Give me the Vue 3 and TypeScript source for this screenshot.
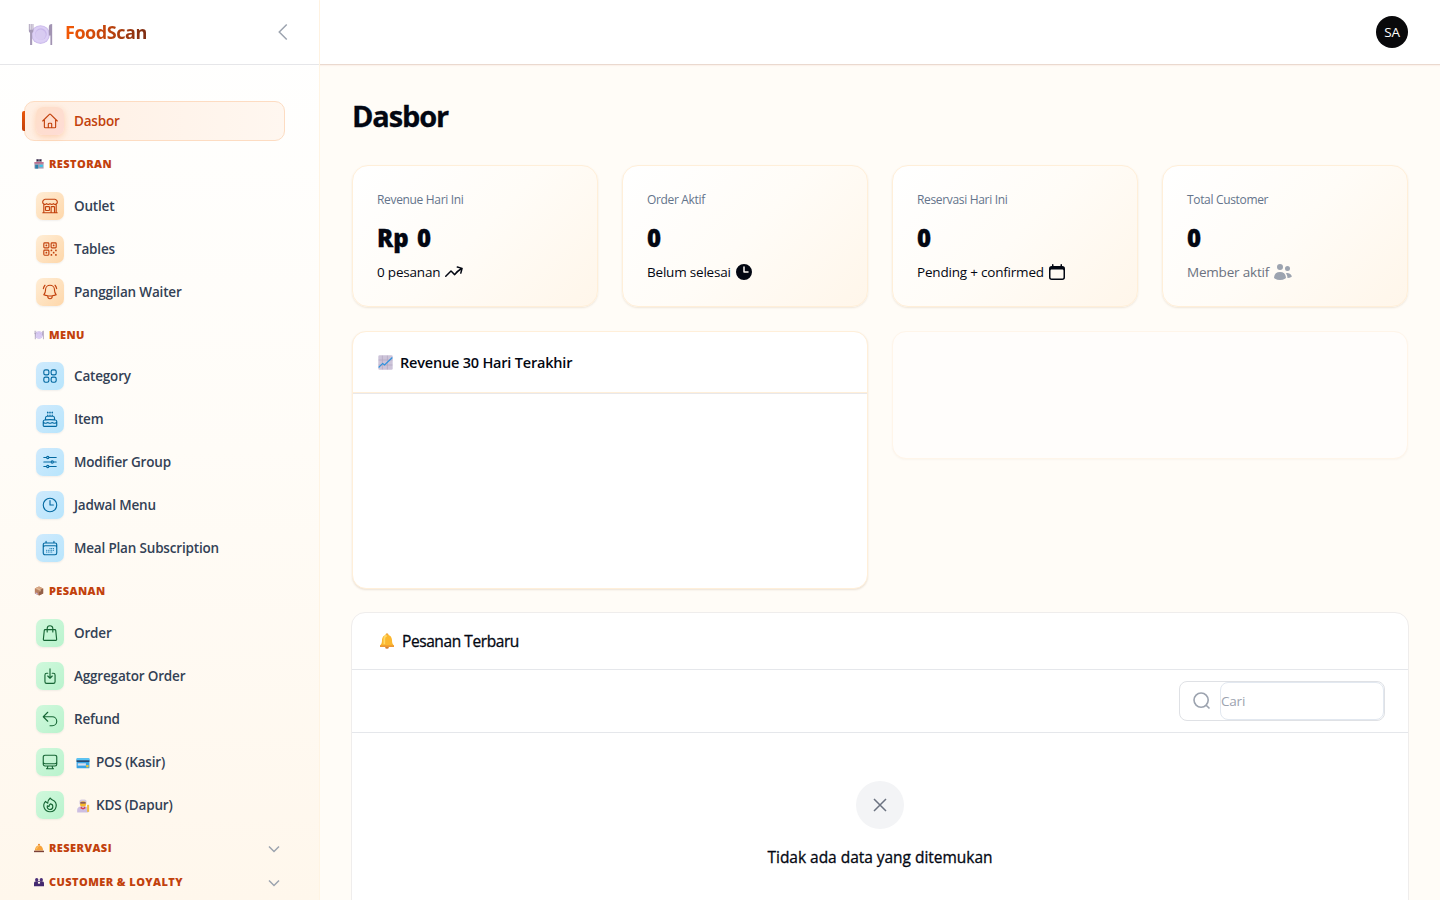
<script setup lang="ts">
interface NavItem {
  label: string
  icon: string
  emoji?: string
}
interface NavGroup {
  label: string
  emoji: string
  tone: string
  items: NavItem[]
}
interface Stat {
  label: string
  value: string
  note: string
  icon: string
  muted?: boolean
}

const outline: Record<string, string> = {
  home: 'm2.25 12 8.954-8.955c.44-.439 1.152-.439 1.591 0L21.75 12M4.5 9.75v10.125c0 .621.504 1.125 1.125 1.125H9.75v-4.875c0-.621.504-1.125 1.125-1.125h2.25c.621 0 1.125.504 1.125 1.125V21h4.125c.621 0 1.125-.504 1.125-1.125V9.75M8.25 21h8.25',
  store: 'M13.5 21v-7.5a.75.75 0 0 1 .75-.75h3a.75.75 0 0 1 .75.75V21m-4.5 0H2.36m11.14 0H18m0 0h3.64m-1.39 0V9.349M3.75 21V9.349m0 0a3.001 3.001 0 0 0 3.75-.615A2.993 2.993 0 0 0 9.75 9.75c.896 0 1.7-.393 2.25-1.016a2.993 2.993 0 0 0 2.25 1.016c.896 0 1.7-.393 2.25-1.015a3.001 3.001 0 0 0 3.75.614m-16.5 0a3.004 3.004 0 0 1-.621-4.72l1.189-1.19A1.5 1.5 0 0 1 5.378 3h13.243a1.5 1.5 0 0 1 1.06.44l1.19 1.189a3 3 0 0 1-.621 4.72M6.75 18h3.75a.75.75 0 0 0 .75-.75V13.5a.75.75 0 0 0-.75-.75H6.75a.75.75 0 0 0-.75.75v3.75c0 .414.336.75.75.75Z',
  qr: 'M3.75 4.875c0-.621.504-1.125 1.125-1.125h4.5c.621 0 1.125.504 1.125 1.125v4.5c0 .621-.504 1.125-1.125 1.125h-4.5A1.125 1.125 0 0 1 3.75 9.375v-4.5ZM3.75 14.625c0-.621.504-1.125 1.125-1.125h4.5c.621 0 1.125.504 1.125 1.125v4.5c0 .621-.504 1.125-1.125 1.125h-4.5a1.125 1.125 0 0 1-1.125-1.125v-4.5ZM13.5 4.875c0-.621.504-1.125 1.125-1.125h4.5c.621 0 1.125.504 1.125 1.125v4.5c0 .621-.504 1.125-1.125 1.125h-4.5A1.125 1.125 0 0 1 13.5 9.375v-4.5ZM6.75 6.75h.75v.75h-.75v-.75ZM6.75 16.5h.75v.75h-.75v-.75ZM16.5 6.75h.75v.75h-.75v-.75ZM13.5 13.5h.75v.75h-.75v-.75ZM13.5 19.5h.75v.75h-.75v-.75ZM19.5 13.5h.75v.75h-.75v-.75ZM19.5 19.5h.75v.75h-.75v-.75ZM16.5 16.5h.75v.75h-.75v-.75Z',
  bell: 'M14.857 17.082a23.848 23.848 0 0 0 5.454-1.31A8.967 8.967 0 0 1 18 9.75V9A6 6 0 0 0 6 9v.75a8.967 8.967 0 0 1-2.312 6.022c1.733.64 3.56 1.085 5.455 1.31m5.714 0a24.255 24.255 0 0 1-5.714 0m5.714 0a3 3 0 1 1-5.714 0M3.124 7.5A8.969 8.969 0 0 1 5.292 3m13.416 0a8.969 8.969 0 0 1 2.168 4.5',
  grid: 'M3.75 6A2.25 2.25 0 0 1 6 3.75h2.25A2.25 2.25 0 0 1 10.5 6v2.25a2.25 2.25 0 0 1-2.25 2.25H6a2.25 2.25 0 0 1-2.25-2.25V6ZM3.75 15.75A2.25 2.25 0 0 1 6 13.5h2.25a2.25 2.25 0 0 1 2.25 2.25V18a2.25 2.25 0 0 1-2.25 2.25H6A2.25 2.25 0 0 1 3.75 18v-2.25ZM13.5 6a2.25 2.25 0 0 1 2.25-2.25H18A2.25 2.25 0 0 1 20.25 6v2.25A2.25 2.25 0 0 1 18 10.5h-2.25a2.25 2.25 0 0 1-2.25-2.25V6ZM13.5 15.75a2.25 2.25 0 0 1 2.25-2.25H18a2.25 2.25 0 0 1 2.25 2.25V18A2.25 2.25 0 0 1 18 20.25h-2.25A2.25 2.25 0 0 1 13.5 18v-2.25Z',
  cake: 'M12 8.25v-1.5m0 1.5c-1.355 0-2.697.056-4.024.166C6.845 8.51 6 9.473 6 10.608v2.513m6-4.871c1.355 0 2.697.056 4.024.166C17.155 8.51 18 9.473 18 10.608v2.513M15 8.25v-1.5m-6 1.5v-1.5m12 9.75-1.5.75a3.354 3.354 0 0 1-3 0 3.354 3.354 0 0 0-3 0 3.354 3.354 0 0 1-3 0 3.354 3.354 0 0 0-3 0 3.354 3.354 0 0 1-3 0L3 16.5m15-3.379a48.474 48.474 0 0 0-6-.371c-2.032 0-4.034.126-6 .371m12 0c.39.049.777.102 1.163.16 1.07.16 1.837 1.094 1.837 2.175v5.169c0 .621-.504 1.125-1.125 1.125H4.125A1.125 1.125 0 0 1 3 20.625v-5.17c0-1.08.768-2.014 1.837-2.174A47.78 47.78 0 0 1 6 13.12M12.265 3.11a.375.375 0 1 1-.53 0L12 2.845l.265.265Zm-3 0a.375.375 0 1 1-.53 0L9 2.845l.265.265Zm6 0a.375.375 0 1 1-.53 0L15 2.845l.265.265Z',
  sliders: 'M10.5 6h9.75M10.5 6a1.5 1.5 0 1 1-3 0m3 0a1.5 1.5 0 1 0-3 0M3.75 6H7.5m3 12h9.75m-9.75 0a1.5 1.5 0 0 1-3 0m3 0a1.5 1.5 0 0 0-3 0m-3.75 0H7.5m9-6h3.75m-3.75 0a1.5 1.5 0 0 1-3 0m3 0a1.5 1.5 0 0 0-3 0m-9.75 0h9.75',
  clock: 'M12 6v6h4.5m4.5 0a9 9 0 1 1-18 0 9 9 0 0 1 18 0Z',
  calendar: 'M6.75 3v2.25M17.25 3v2.25M3 18.75V7.5a2.25 2.25 0 0 1 2.25-2.25h13.5A2.25 2.25 0 0 1 21 7.5v11.25m-18 0A2.25 2.25 0 0 0 5.25 21h13.5A2.25 2.25 0 0 0 21 18.75m-18 0v-7.5A2.25 2.25 0 0 1 5.25 9h13.5A2.25 2.25 0 0 1 21 11.25v7.5m-9-6h.008v.008H12v-.008ZM12 15h.008v.008H12V15Zm0 2.25h.008v.008H12v-.008ZM9.75 15h.008v.008H9.75V15Zm0 2.25h.008v.008H9.75v-.008ZM7.5 15h.008v.008H7.5V15Zm0 2.25h.008v.008H7.5v-.008Zm6.75-4.5h.008v.008h-.008v-.008Zm0 2.25h.008v.008h-.008V15Zm0 2.25h.008v.008h-.008v-.008Zm2.25-4.5h.008v.008H16.5v-.008Zm0 2.25h.008v.008H16.5V15Z',
  bag: 'M15.75 10.5V6a3.75 3.75 0 1 0-7.5 0v4.5m11.356-1.993 1.263 12c.07.665-.45 1.243-1.119 1.243H4.25a1.125 1.125 0 0 1-1.12-1.243l1.264-12A1.125 1.125 0 0 1 5.513 7.5h12.974c.576 0 1.059.435 1.119 1.007Z',
  inbox: 'M9 8.25H7.5a2.25 2.25 0 0 0-2.25 2.25v9a2.25 2.25 0 0 0 2.25 2.25h9a2.25 2.25 0 0 0 2.25-2.25v-9a2.25 2.25 0 0 0-2.25-2.25H15M9 12l3 3m0 0 3-3m-3 3V2.25',
  undo: 'M9 15 3 9m0 0 6-6M3 9h12a6 6 0 0 1 0 12h-3',
  desktop: 'M9 17.25v1.007a3 3 0 0 1-.879 2.122L7.5 21h9l-.621-.621A3 3 0 0 1 15 18.257V17.25m6-12V15a2.25 2.25 0 0 1-2.25 2.25H5.25A2.25 2.25 0 0 1 3 15V5.25m18 0A2.25 2.25 0 0 0 18.75 3H5.25A2.25 2.25 0 0 0 3 5.25m18 0V12a2.25 2.25 0 0 1-2.25 2.25H5.25A2.25 2.25 0 0 1 3 12V5.25',
  fire: 'M15.362 5.214A8.252 8.252 0 0 1 12 21 8.25 8.25 0 0 1 6.038 7.047 8.287 8.287 0 0 0 9 9.601a8.983 8.983 0 0 1 3.361-6.867 8.21 8.21 0 0 0 3 2.48ZM12 18a3.75 3.75 0 0 0 .495-7.468 5.99 5.99 0 0 0-1.925 3.547 5.975 5.975 0 0 1-2.133-1.001A3.75 3.75 0 0 0 12 18Z',
}

const solid: Record<string, string> = {
  trend: 'M12.577 4.878a.75.75 0 0 1 .919-.53l4.78 1.281a.75.75 0 0 1 .531.919l-1.281 4.78a.75.75 0 0 1-1.449-.387l.81-3.022a19.407 19.407 0 0 0-5.594 5.203.75.75 0 0 1-1.139.093L7 10.06l-4.72 4.72a.75.75 0 0 1-1.06-1.061l5.25-5.25a.75.75 0 0 1 1.06 0l3.074 3.073a20.923 20.923 0 0 1 5.545-4.931l-3.042-.815a.75.75 0 0 1-.53-.919Z',
  clock: 'M10 18a8 8 0 1 0 0-16 8 8 0 0 0 0 16Zm.75-13a.75.75 0 0 0-1.5 0v5c0 .414.336.75.75.75h4a.75.75 0 0 0 0-1.5h-3.25V5Z',
  calendar: 'M5.75 2a.75.75 0 0 1 .75.75V4h7V2.75a.75.75 0 0 1 1.5 0V4h.25A2.75 2.75 0 0 1 18 6.75v8.5A2.75 2.75 0 0 1 15.25 18H4.75A2.75 2.75 0 0 1 2 15.25v-8.5A2.75 2.75 0 0 1 4.75 4H5V2.75A.75.75 0 0 1 5.75 2Zm-1 5.5c-.69 0-1.25.56-1.25 1.25v6.5c0 .69.56 1.25 1.25 1.25h10.5c.69 0 1.25-.56 1.25-1.25v-6.5c0-.69-.56-1.25-1.25-1.25H4.75Z',
  users: 'M7 8a3 3 0 1 0 0-6 3 3 0 0 0 0 6ZM14.5 9a2.5 2.5 0 1 0 0-5 2.5 2.5 0 0 0 0 5ZM1.615 16.428a1.224 1.224 0 0 1-.569-1.175 6.002 6.002 0 0 1 11.908 0c.058.467-.172.92-.57 1.174A9.953 9.953 0 0 1 7 18a9.953 9.953 0 0 1-5.385-1.572ZM14.5 16h-.106c.07-.297.088-.611.048-.933a7.47 7.47 0 0 0-1.588-3.755 4.502 4.502 0 0 1 5.874 2.636.818.818 0 0 1-.36.98A7.465 7.465 0 0 1 14.5 16Z',
}

/* Small colour pictograms, each on a 24-unit grid. */
const pictos: Record<string, string> = {
  plate:
    '<circle cx="12" cy="12" r="9" fill="#cdbdec"/><circle cx="12" cy="12" r="8" fill="#dccff5"/><circle cx="12.4" cy="11.6" r="5.6" fill="#c9b8ea"/><circle cx="12" cy="12.3" r="5" fill="#d8cbf1"/><path d="M.8 2v6.2c0 1.2.5 1.9 1.2 2.2V22h2V10.4c.8-.3 1.2-1 1.2-2.200V2H4.300v5.500h-.8V2h-1v5.500h-.8V2z" fill="#a79bb8"/><path d="M20 13V5c0-2 1-3 3.200-3v20h-1.700v-9z" fill="#a294b3"/>',
  shop:
    '<rect x="5" y="0" width="14" height="9" fill="#b5adbf"/><rect x="6.500" y="1" width="4.500" height="4.500" fill="#30243c"/><rect x="13" y="1" width="4.500" height="4.500" fill="#30243c"/><rect x="1" y="8" width="22" height="15" fill="#a3a0b5"/><rect x="1" y="8" width="22" height="2.500" fill="#c94d74"/><rect x="3" y="14" width="7" height="9" fill="#2c7fa8"/><rect x="13" y="14" width="8" height="5" fill="#37c8ee"/>',
  box:
    '<path d="m12 1 10 5v12l-10 5L2 18V6z" fill="#b98061"/><path d="m12 1 10 5-10 5L2 6z" fill="#d6a583"/><path d="M12 11v12l10-5V6z" fill="#936049"/><path d="m6 3.800 10 5v4l-3 1.200v-4L4 5z" fill="#e4bb98"/><path d="m4 15 5 3v3l-5-2.500z" fill="#c7b3e0"/>',
  service:
    '<circle cx="12" cy="4" r="2.500" fill="#e98a2c"/><path d="M2 18C2.500 10.500 6 6 12 6s9.500 4.500 10 12z" fill="#f7a23b"/><path d="M6 15c.6-4 2-6 5-7" stroke="#ffd279" stroke-width="2" fill="none"/><rect x="0" y="18.500" width="24" height="3.500" fill="#7a4038"/>',
  people:
    '<circle cx="6.500" cy="6.500" r="4" fill="#4a2e78"/><circle cx="17.500" cy="6.500" r="4" fill="#4a2e78"/><path d="M0 22v-7c0-3 2-5 5-5h14c3 0 5 2 5 5v7z" fill="#43296f"/><rect x="9.500" y="12" width="5" height="4" fill="#fff6ea"/>',
  card:
    '<rect x="1" y="4" width="22" height="17" rx="1.500" fill="#36a3e4"/><rect x="1" y="4" width="22" height="5" fill="#5bc5f3"/><rect x="1" y="7.500" width="22" height="2.500" fill="#23365c"/><rect x="3" y="12.500" width="14" height="4" fill="#d6dff0"/><rect x="17.500" y="15.500" width="4" height="4" fill="#f4c534"/>',
  cook:
    '<path d="M6 6C5 1.500 8 0 12 1c4-1 7 .5 6 5v3H6z" fill="#d5cbe0"/><circle cx="12" cy="9" r="5" fill="#f8b92d"/><path d="M7.500 5h9v3h-9z" fill="#8b5c59"/><path d="M2 23v-4c0-3.500 3-6 6-6h8c3 0 5 2.500 5 6v4z" fill="#cdbfe2"/><path d="m8.500 13 3.500 3 3.500-3 1 3-4.500 2-4.500-2z" fill="#d93b52"/><rect x="19" y="10" width="3.500" height="12" fill="#f2bd45"/>',
  chart:
    '<rect x=".5" y=".5" width="23" height="23" rx="2" fill="#cdc4d9"/><path d="M7 1v22M1 8h22M1 16h22M15 1v22" stroke="#b3a8c1" stroke-width="1.200"/><path d="m1 20 6.500-6.500 3 2.500L23 4" stroke="#2e91de" stroke-width="1.900" fill="none"/>',
  alarm:
    '<path d="M10 3.500a2.200 2.200 0 1 1 4 0z" fill="#efa43a"/><circle cx="12" cy="21" r="2.800" fill="#d67d2c"/><path d="M4.500 11c0-5 3-8.500 7.500-8.500s7.500 3.500 7.500 8.500c0 4 1 6 3 8v2h-21v-2c2-2 3-4 3-8z" fill="#fbb72f"/><path d="M8 17V9c0-3 1.500-4.500 3.500-5" stroke="#ffda68" stroke-width="2.500" fill="none"/><path d="M1.500 18.500h21V21h-21z" fill="#ec9834"/>',
}

const groups: NavGroup[] = [
  {
    label: 'RESTORAN', emoji: 'shop', tone: 'amber',
    items: [
      { label: 'Outlet', icon: 'store' },
      { label: 'Tables', icon: 'qr' },
      { label: 'Panggilan Waiter', icon: 'bell' },
    ],
  },
  {
    label: 'MENU', emoji: 'plate', tone: 'sky',
    items: [
      { label: 'Category', icon: 'grid' },
      { label: 'Item', icon: 'cake' },
      { label: 'Modifier Group', icon: 'sliders' },
      { label: 'Jadwal Menu', icon: 'clock' },
      { label: 'Meal Plan Subscription', icon: 'calendar' },
    ],
  },
  {
    label: 'PESANAN', emoji: 'box', tone: 'mint',
    items: [
      { label: 'Order', icon: 'bag' },
      { label: 'Aggregator Order', icon: 'inbox' },
      { label: 'Refund', icon: 'undo' },
      { label: 'POS (Kasir)', icon: 'desktop', emoji: 'card' },
      { label: 'KDS (Dapur)', icon: 'fire', emoji: 'cook' },
    ],
  },
]

const folded = [
  { label: 'RESERVASI', emoji: 'service' },
  { label: 'CUSTOMER & LOYALTY', emoji: 'people' },
]

const stats: Stat[] = [
  { label: 'Revenue Hari Ini', value: 'Rp 0', note: '0 pesanan', icon: 'trend' },
  { label: 'Order Aktif', value: '0', note: 'Belum selesai', icon: 'clock' },
  { label: 'Reservasi Hari Ini', value: '0', note: 'Pending + confirmed', icon: 'calendar' },
  { label: 'Total Customer', value: '0', note: 'Member aktif', icon: 'users', muted: true },
]
</script>

<template>
  <div class="app">
    <aside class="sidebar">
      <header class="brand">
        <svg class="brand-mark" viewBox="0 0 24 24" v-html="pictos.plate"></svg>
        <span class="brand-name">FoodScan</span>
        <svg class="collapse" viewBox="0 0 24 24"><path d="M15.750 19.500 8.250 12l7.500-7.500" /></svg>
      </header>

      <nav class="nav">
        <a class="item active">
          <span class="tile rose"><svg class="glyph" viewBox="0 0 24 24"><path :d="outline.home" /></svg></span>
          <span class="item-label">Dasbor</span>
        </a>

        <section v-for="g in groups" :key="g.label">
          <h2 class="group-label">
            <svg viewBox="0 0 24 24" v-html="pictos[g.emoji]"></svg>
            <span>{{ g.label }}</span>
          </h2>
          <div class="items">
            <a v-for="i in g.items" :key="i.label" class="item">
              <span class="tile" :class="g.tone"><svg class="glyph" viewBox="0 0 24 24"><path :d="outline[i.icon]" /></svg></span>
              <svg v-if="i.emoji" class="item-emoji" viewBox="0 0 24 24" v-html="pictos[i.emoji]"></svg>
              <span class="item-label">{{ i.label }}</span>
            </a>
          </div>
        </section>

        <div class="folded-list">
          <h2 v-for="f in folded" :key="f.label" class="group-label folded">
            <svg viewBox="0 0 24 24" v-html="pictos[f.emoji]"></svg>
            <span>{{ f.label }}</span>
            <svg class="chevron" viewBox="0 0 20 20"><path d="m5 7.500 5 5 5-5" /></svg>
          </h2>
        </div>
      </nav>
    </aside>

    <div class="main">
      <header class="topbar"><span class="avatar">SA</span></header>

      <main class="content">
        <h1>Dasbor</h1>

        <div class="stats">
          <article v-for="s in stats" :key="s.label" class="stat">
            <span class="stat-label">{{ s.label }}</span>
            <strong class="stat-value">{{ s.value }}</strong>
            <span class="stat-note" :class="{ muted: s.muted }">
              <span>{{ s.note }}</span>
              <svg viewBox="0 0 20 20"><path fill-rule="evenodd" clip-rule="evenodd" :d="solid[s.icon]" /></svg>
            </span>
          </article>
        </div>

        <div class="charts">
          <section class="chart">
            <header class="chart-head">
              <svg viewBox="0 0 24 24" v-html="pictos.chart"></svg>
              <span>Revenue 30 Hari Terakhir</span>
            </header>
          </section>
          <section class="ghost"></section>
        </div>

        <section class="table">
          <header class="table-head">
            <svg viewBox="0 0 24 24" v-html="pictos.alarm"></svg>
            <span>Pesanan Terbaru</span>
          </header>
          <div class="toolbar">
            <div class="search">
              <svg viewBox="0 0 20 20"><path d="M14.200 14.200 17.500 17.500M16.200 9.100a7.100 7.100 0 1 1-14.200 0 7.100 7.100 0 0 1 14.200 0Z" /></svg>
              <div class="field">Cari</div>
            </div>
          </div>
          <div class="empty">
            <span class="empty-mark"><svg viewBox="0 0 24 24"><path d="M6 18 18 6M6 6l12 12" /></svg></span>
            <span class="empty-text">Tidak ada data yang ditemukan</span>
          </div>
        </section>
      </main>
    </div>
  </div>
</template>

<style>
html,
body {
  margin: 0;
  overflow: hidden;
}
</style>

<style scoped>
.app,
.app * {
  box-sizing: border-box;
}
.app {
  display: flex;
  width: 100%;
  height: 100vh;
  overflow: hidden;
  background: #fffcf7;
  color: #030712;
  font-family: "Open Sans", "Noto Sans", sans-serif;
}
h1,
h2 {
  margin: 0;
}
svg {
  flex: none;
  display: block;
}

/* Sidebar */
.sidebar {
  width: 320px;
  flex: none;
  height: 100vh;
  overflow: hidden;
  border-right: 1px solid #fff4e3;
  background: linear-gradient(180deg, #ffffff 0%, #fffcf7 50%, #fff7ec 100%);
}
.brand {
  display: flex;
  align-items: center;
  height: 65px;
  padding: 0 24px 0 28px;
  background: #fff;
  border-bottom: 1px solid #e6e6e9;
}
.brand-mark {
  width: 25px;
  height: 25px;
  margin-top: 4px;
}
.brand-name {
  margin-left: 12px;
  font-size: 18px;
  font-weight: 700;
  line-height: 28px;
  letter-spacing: -0.45px;
  background: linear-gradient(90deg, #f55a06 0%, #c2440c 50%, #7c2d12 100%);
  background-clip: text;
  color: transparent;
}
.collapse {
  width: 24px;
  height: 24px;
  margin-left: auto;
  fill: none;
  stroke: #9ca3af;
  stroke-width: 1.5;
}
.nav {
  padding: 36px 34px 0 24px;
}
.items {
  display: flex;
  flex-direction: column;
  gap: 3px;
}
.item {
  position: relative;
  display: flex;
  align-items: center;
  height: 40px;
  padding-left: 12px;
  color: #334155;
}
.active {
  padding-left: 11px;
  border: 1px solid #fddcc2;
  border-radius: 10px;
  background: linear-gradient(90deg, #ffefe3 0%, #fff7f0 100%);
  color: #c2410c;
}
.active::before {
  content: "";
  position: absolute;
  left: -3px;
  top: 9px;
  width: 3px;
  height: 20px;
  border-radius: 2px 0 0 2px;
  background: linear-gradient(180deg, #ea580c, #c2410c);
}
.tile {
  display: grid;
  place-items: center;
  width: 28px;
  height: 28px;
  margin-right: 10px;
  border-radius: 7px;
  box-shadow: 0 1px 2px rgba(15, 23, 42, 0.06);
}
.rose {
  background: linear-gradient(135deg, #fedfc8, #fedcd6);
  box-shadow: 0 2px 6px rgba(249, 115, 22, 0.25);
  color: #c2410c;
}
.amber {
  background: linear-gradient(135deg, #ffedd5, #fed7aa);
  color: #c2410c;
}
.sky {
  background: linear-gradient(135deg, #cfeafd, #b8e5fc);
  color: #0369a1;
}
.mint {
  background: linear-gradient(135deg, #d0f8dc, #b9f3cd);
  color: #166534;
}
.glyph {
  width: 18px;
  height: 18px;
  fill: none;
  stroke: currentColor;
  stroke-width: 1.5;
  stroke-linecap: round;
  stroke-linejoin: round;
}
.item-label {
  font-size: 13.5px;
  font-weight: 600;
  letter-spacing: -0.18px;
  line-height: 20px;
  white-space: nowrap;
}
.item-emoji {
  width: 14px;
  height: 14px;
  margin: 2px 6px 0 2px;
}
.group-label {
  display: flex;
  align-items: center;
  height: 44.6px;
  padding: 2px 2px 0 10px;
  color: #c2410c;
  font-size: 11px;
  font-weight: 800;
  line-height: 16px;
  letter-spacing: 0.42px;
}
.group-label svg {
  width: 10px;
  height: 10px;
  margin-right: 5px;
}
.folded-list {
  padding-top: 5px;
}
.folded {
  height: 34px;
}
.group-label .chevron {
  width: 20px;
  height: 20px;
  margin: 2px -1px 0 auto;
  fill: none;
  stroke: #9ca3af;
  stroke-width: 1.5;
}

/* Page */
.main {
  flex: 1;
  min-width: 0;
}
.topbar {
  display: flex;
  align-items: center;
  justify-content: flex-end;
  height: 65px;
  padding: 0 32px;
  background: #fff;
  border-bottom: 1px solid #ead9cf;
  box-shadow: 0 1px 1px rgba(194, 65, 12, 0.05);
}
.avatar {
  display: grid;
  place-items: center;
  width: 32px;
  height: 32px;
  border-radius: 50%;
  background: #09090b;
  color: #fff;
  font-size: 13.5px;
  letter-spacing: -0.3px;
}
.content {
  padding: 33px 31px 0 32px;
}
h1 {
  font-size: 29px;
  font-weight: 700;
  line-height: 36px;
  letter-spacing: -1.15px;
  -webkit-text-stroke: 0.3px currentColor;
}
.stats {
  display: grid;
  grid-template-columns: repeat(4, 246px);
  gap: 24px;
  margin-top: 31px;
}
.stat {
  display: flex;
  flex-direction: column;
  height: 142px;
  padding: 25px 24px;
  border: 1px solid #ffefd9;
  border-radius: 16px;
  background: linear-gradient(135deg, #ffffff 0%, #fffcf7 50%, #fff6ea 100%);
  box-shadow: 0 1px 2px rgba(120, 70, 20, 0.12);
}
.stat-label {
  color: #64748b;
  font-size: 12px;
  line-height: 18px;
  letter-spacing: -0.33px;
}
.stat-value {
  margin-top: 11px;
  font-size: 24px;
  font-weight: 800;
  line-height: 36px;
  letter-spacing: 0;
  word-spacing: 2px;
  -webkit-text-stroke: 0.3px currentColor;
}
.stat-note {
  display: flex;
  align-items: center;
  gap: 3.5px;
  margin-top: 6px;
  font-size: 13.5px;
  line-height: 20px;
  letter-spacing: -0.2px;
}
.stat-note svg {
  width: 20px;
  height: 20px;
  fill: currentColor;
}
.muted {
  color: #6b7280;
}
.muted svg {
  color: #9ca3af;
}
.charts {
  display: grid;
  grid-template-columns: 516px 516px;
  align-items: start;
  gap: 24px;
  margin-top: 24px;
}
.chart {
  height: 258px;
  border: 1px solid #ffefd9;
  border-radius: 14px;
  background: #fff;
  box-shadow: 0 1px 2px rgba(120, 70, 20, 0.14);
}
.chart-head {
  display: flex;
  align-items: center;
  gap: 7px;
  height: 61px;
  padding-left: 25px;
  border-bottom: 1px solid #ffefd9;
  box-shadow: 0 1px 0 #e9e8ea;
  font-size: 14.5px;
  font-weight: 600;
  letter-spacing: -0.2px;
}
.chart-head svg {
  width: 15px;
  height: 15px;
}
.ghost {
  height: 128px;
  border: 1px solid #fff5e9;
  border-radius: 14px;
  background: #fffdfb;
  box-shadow: 0 1px 2px rgba(120, 70, 20, 0.04);
}
.table {
  height: 360px;
  margin: 23px 0 0 -1px;
  border: 1px solid #efedec;
  border-radius: 14px;
  background: #fff;
}
.table-head {
  display: flex;
  align-items: center;
  gap: 7px;
  height: 57px;
  padding-left: 27px;
  border-bottom: 1px solid #e5e7eb;
  font-size: 15.5px;
  letter-spacing: -0.42px;
  -webkit-text-stroke: 0.3px currentColor;
}
.table-head svg {
  width: 16px;
  height: 16px;
}
.toolbar {
  display: flex;
  align-items: center;
  justify-content: flex-end;
  height: 63px;
  padding-right: 23px;
  border-bottom: 1px solid #e5e7eb;
}
.search {
  display: flex;
  align-items: stretch;
  width: 206px;
  height: 40px;
  border: 1px solid #dfe1e5;
  border-radius: 8px;
}
.search svg {
  align-self: center;
  width: 20px;
  height: 20px;
  margin: 0 8px 0 12px;
  fill: none;
  stroke: #9ca3af;
  stroke-width: 1.6;
}
.field {
  flex: 1;
  display: flex;
  align-items: center;
  border: 1px solid #e2e8f0;
  border-radius: 8px;
  color: #9ca3af;
  font-size: 13.5px;
  letter-spacing: -0.2px;
}
.empty {
  display: flex;
  flex-direction: column;
  align-items: center;
  padding-top: 48px;
}
.empty-mark {
  display: grid;
  place-items: center;
  width: 48px;
  height: 48px;
  border-radius: 50%;
  background: #f3f4f6;
}
.empty-mark svg {
  width: 24px;
  height: 24px;
  fill: none;
  stroke: #6b7280;
  stroke-width: 1.5;
}
.empty-text {
  margin-top: 16px;
  font-size: 15.5px;
  line-height: 24px;
  letter-spacing: -0.03px;
  -webkit-text-stroke: 0.3px currentColor;
}
</style>
